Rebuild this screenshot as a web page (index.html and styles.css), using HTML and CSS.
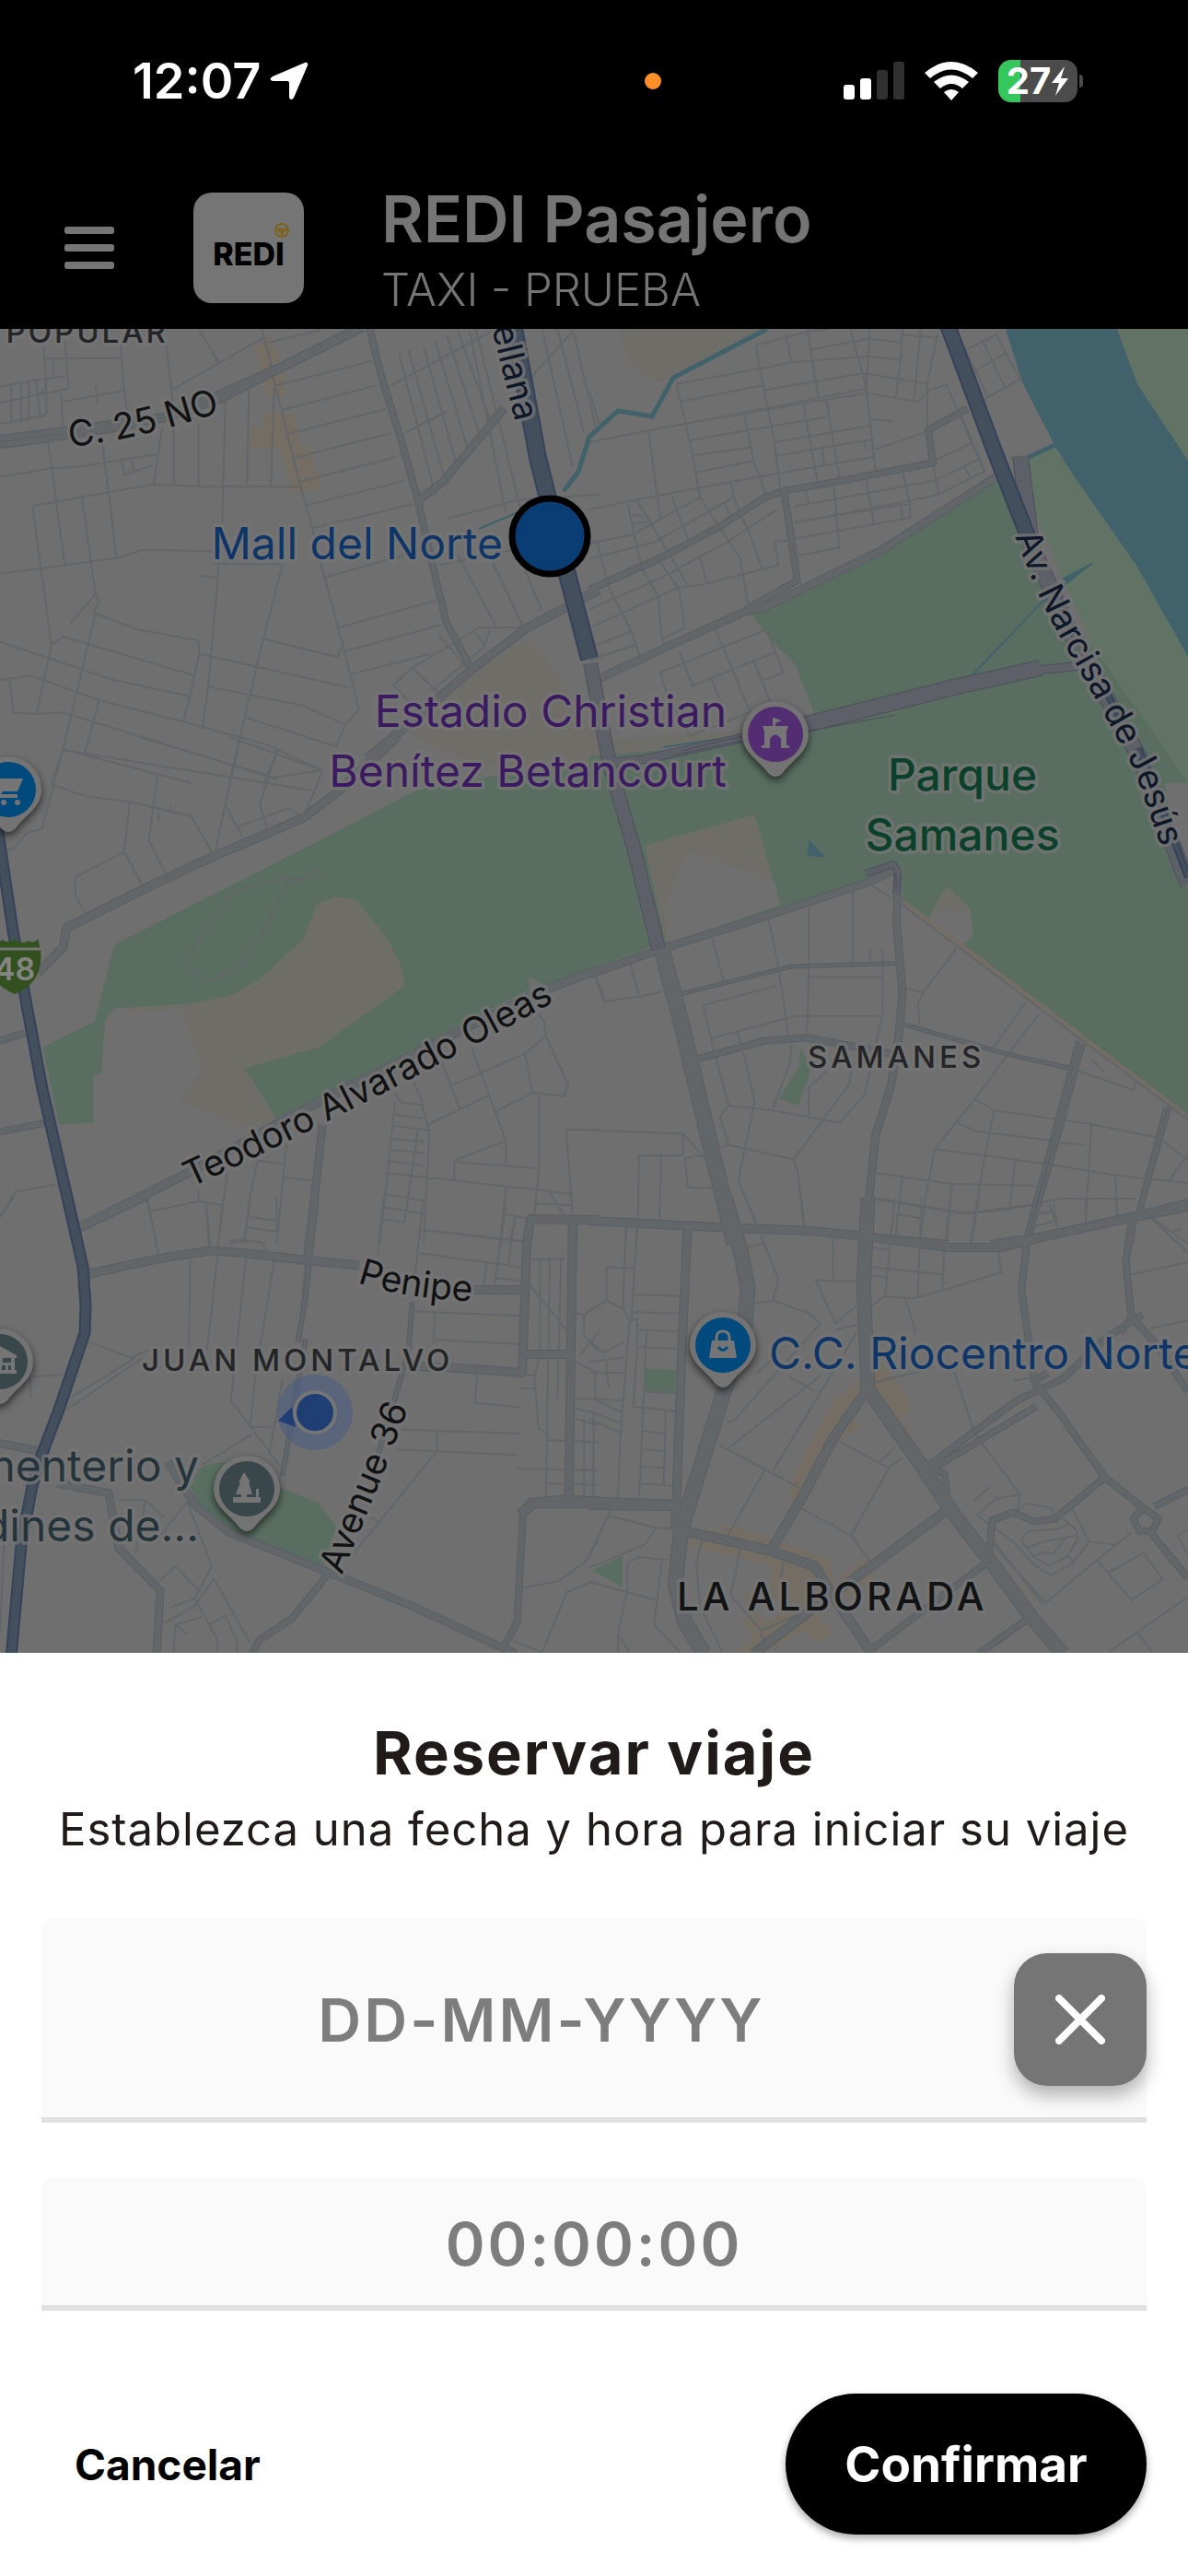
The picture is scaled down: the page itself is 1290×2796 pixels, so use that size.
FILE: index.html
```html
<!DOCTYPE html>
<html lang="es">
<head>
<meta charset="utf-8">
<meta name="viewport" content="width=device-width, initial-scale=1">
<title>REDI Pasajero</title>
<link rel="stylesheet" href="styles.css">
</head>
<body>
<div class="app">
  <header class="top">
    <div class="status">
      <div class="status-left">
        <span class="clock">12:07</span>
        <svg class="arrow" viewBox="0 0 42 42" aria-hidden="true"><path d="M38 1Q42 0 41 4L26 39Q23 43 21 39V23Q21 21 19 21H3Q-2 19 3 16Z"/></svg>
      </div>
      <span class="mic-dot"></span>
      <div class="status-right">
        <svg class="signal" viewBox="0 0 66 42" aria-hidden="true"><rect x="0" y="25" width="12" height="16" rx="3"/><rect x="18" y="18" width="12" height="23" rx="3"/><rect class="off" x="36" y="9" width="12" height="32" rx="3"/><rect class="off" x="54" y="0" width="12" height="41" rx="3"/></svg>
        <svg class="wifi" viewBox="0 0 58 42" aria-hidden="true"><path d="M0 12Q29-12 58 12L52 18Q29-1 6 18Z"/><path d="M10 22Q29 7 48 22L41 29Q29 19 17 29Z"/><path d="M21 33Q29 27 37 33L29 42Z"/></svg>
        <div class="battery"><span>27</span><svg viewBox="0 0 20 32" aria-hidden="true"><path d="M15 0L1 18H9L5 32L19 13H11Z"/></svg></div>
        <span class="battery-tip"></span>
      </div>
    </div>
    <div class="bar">
      <button class="menu" type="button" aria-label="Menú"><span></span><span></span><span></span></button>
      <div class="logo">
        <svg class="wheel" viewBox="0 0 18 18" aria-hidden="true"><circle cx="9" cy="9" r="7"/><path d="M2 8H16M9 9V16M5 9L9 12L13 9"/></svg>
        <span class="wordmark">REDI</span>
      </div>
      <div class="heading"><h1>REDI Pasajero</h1><p>TAXI - PRUEBA</p></div>
    </div>
  </header>

  <main class="map">
    <svg viewBox="0 357 1290 1437" preserveAspectRatio="xMidYMid slice" role="img" aria-label="Mapa">
      <defs>
        <g id="avenues">
          <g transform="translate(0 350) scale(.41454 .33333)">
            <path class="w7" d="M0 378L100 362L260 335L430 305L560 240L740 140L930 20M0 400L130 378L300 345L430 312L580 250L720 160L950 20"/>
            <path class="w6" d="M968 20L1000 180L1050 380L1095 580L1135 800L1170 980L1235 1130"/>
            <path class="w8" d="M1095 580L1160 520L1320 280"/>
            <path class="w9" d="M960 1420L1050 1330L1235 1130L1380 995L1480 930L1568 870"/>
          </g>
          <g transform="translate(640 350) scale(.41454 .33333)">
            <path class="w7" d="M0 870L190 765L340 665L460 570L510 548L640 520L900 457L888 350L990 280M510 548L545 840L410 935"/>
            <path class="w8" d="M25 1160L240 1035L410 940L455 930L760 745L1070 500"/>
          </g>
          <g transform="translate(0 800) scale(.41454 .35077)">
            <path class="w9" d="M1040 0L890 165L795 250L520 390L370 475L175 590L165 650L100 730"/>
            <path class="w7" d="M0 940L65 915M0 1222L115 1195"/>
            <path class="w9" d="M205 1520L490 1350L800 1150L1220 900L1420 785L1568 720"/>
            <path class="w8" d="M845 1200L810 1568M1568 1497L1390 1490L1380 1568M1502 1497V1568"/>
          </g>
          <g transform="translate(640 800) scale(.41454 .35077)">
            <path class="w8" d="M0 735L190 655L460 555L730 450L800 410L808 430L805 580L820 790L810 930L790 1080L750 1230L720 1568"/>
            <path class="w16" d="M185 640L240 880L300 1180L380 1568"/>
            <path class="w7" d="M285 995L460 940L570 930L790 980M0 1497L360 1515L580 1525L720 1545L940 1568M1050 1568L1180 1545L1430 1480L1568 1440M1425 1490L1415 1568"/>
            <path class="w3" d="M240 795L530 710L810 700M820 888L1090 980L1260 1025"/>
            <path class="w3" d="M1280 940L1220 1210L1145 1540M1293 950L1235 1210L1155 1540M1510 1145L1435 1480M1520 1145L1440 1480"/>
          </g>
          <g transform="translate(0 1300) scale(.41454 .33333)">
            <path class="w9" d="M205 100L390 -10M225 250L410 200L550 172L640 180L810 205L940 220"/>
            <path class="w9" d="M825 0L805 205M1240 300H1370M1568 72L1390 70L1380 150L1368 570L1270 560L1080 548M1500 75L1490 990M1370 510H1490"/>
            <path class="w5" d="M1080 340L1070 500L990 840M810 215L800 330L780 470M800 460L740 905"/>
            <path class="w8" d="M0 800L120 828L60 880M150 930L285 962L310 1140L420 1280L410 1490M440 860L510 1000L600 1090L860 1220L1080 1330L1350 1485"/>
            <path class="w7" d="M860 1225L765 1370L680 1440L660 1485M1568 1000H1400L1370 1030L1355 1380L1320 1460M1568 985L1470 980L1390 990L1360 1030"/>
          </g>
          <g transform="translate(640 1300) scale(.41454 .33333)">
            <path class="w9" d="M0 75L360 98L580 108L720 125L940 162H1080L1180 130L1400 70L1568 30"/>
            <path class="w18" d="M355 0L395 170L415 290L405 460L350 640L240 1080L225 1260L250 1380L300 1485"/>
            <path class="w13" d="M730 0L718 280L730 625L860 855L960 1040L1060 1200L1160 1370L1240 1485"/>
            <path class="w9" d="M257 95L242 500L225 1080"/>
            <path class="w10" d="M725 630L640 780L560 970L475 1150M250 1085L475 1150L590 1200L640 1300L740 1485M430 1485L600 1325L760 1180L940 1015"/>
            <path class="w7" d="M0 985L220 995M0 1005L220 1008M1145 150L1132 300L1165 600M1420 80L1405 210L1420 390M1165 600L1200 570M1165 600L1225 690L1350 910L1450 1010M890 870L1120 660L1240 590L1350 460L1450 380M895 885L1170 680M870 860L930 900L940 1010M1420 390L1390 440M1420 390L1480 470L1568 630M1350 910L1220 1045L1165 1055L1110 1025L1055 1050L1045 1190"/>
            <path class="w7" d="M1450 1010L1425 1045L1440 1085L1475 1085L1490 1045ZM1480 1005L1568 950M1470 1090L1568 1240M740 1470L910 1310L1040 1190M1020 1485L1150 1370"/>
          </g>
        </g>
        <g id="highways">
          <path class="w14" d="M556 345L584 497L596 545L619 635L640 715"/>
          <path class="w13" d="M1026 345L1041 385L1080 490L1120 592"/>
          <path class="w5" d="M1150 650L1166 690M1196 740L1222 792M1236 812L1246 836L1290 952"/>
          <path class="w10" d="M-4 890L14 1010L31 1102L46 1182L79 1326L90 1375L93 1417L92 1447L64 1530L46 1577L35 1613L23 1677L12 1800"/>
        </g>
        <g id="trunks">
          <path class="w13" d="M641 720L662 830L688 920L715 1030"/>
          <path class="w9" d="M662 828L700 824L820 798"/>
          <path class="w14" d="M860 790L1040 745L1130 725"/>
          <path class="w9" d="M1120 728L1180 722"/>
          <path class="w14" d="M1108 495L1120 592L1164 690L1195 745L1236 820L1290 960"/>
          <path class="w7" d="M940 948L970 938L975 946L973 970"/>
        </g>
      </defs>

      <rect class="land" y="340" width="1290" height="1480"/>

      <g transform="translate(0 350) scale(.41454 .33333)">
        <path class="shops" d="M665 80L710 40L745 170V240H700ZM655 340H690L685 295H770L785 400H810L840 540L765 555L735 410H655Z"/>
        <path class="sand" d="M1390 1030L1270 1110L1060 1330L1240 1440L1568 1460V1350Z"/>
      </g>
      <g transform="translate(640 350) scale(.41454 .33333)">
        <path class="sand" d="M65 0L110 150L185 195L215 185L480 20V0ZM0 1360L340 1340L600 1270V1310L0 1420Z"/>
        <path class="bank" d="M1110 460L1225 395L1290 500L1440 790L1568 1050V1500H1500L1300 1000ZM1380 0L1435 200L1568 450V0Z"/>
        <path class="park" d="M420 945L760 745L1070 505L1150 760L1350 1110L1568 1500H100L80 1430L600 1310L540 1115L480 1040Z"/>
      </g>
      <g transform="translate(0 800) scale(.41454 .35077)">
        <path class="park" d="M300 642L730 385L1090 165L1290 120L1640 80L1720 640L1430 770L1380 740L1390 780L725 1180L640 1025L700 1180L270 1040L265 1040L245 1045V1194L155 1198L112 960L248 880Z"/>
        <path class="land-area" d="M300 838L480 838L530 1030L470 1125L640 1205L500 1290L245 1194V1045L265 1040L275 880Z"/>
        <path class="sand" d="M320 838L510 824L615 795L680 750L795 625L830 515L875 495L932 503L1015 625L1050 705L1060 770L835 960L640 1025L690 1135L725 1180L660 1215L470 1125L530 1030L475 838L330 858Z"/>
      </g>
      <g transform="translate(640 800) scale(.41454 .35077)">
        <path class="park" d="M0 60L600 0H1480L1568 480V1170L980 640L820 510V410L730 440L200 640L160 650L0 720Z"/>
        <path class="sand" d="M145 335L433 240L500 520L200 640ZM888 560L935 462L998 530L1006 615L975 640Z"/>
        <path class="land-area" d="M258 355L485 445L500 520L205 640L195 530ZM905 535L998 545L1006 615L978 640L888 560Z"/>
        <path class="water" d="M575 318L620 373L570 367Z"/>
        <path class="park" d="M553 958L580 1030L547 1140L497 1118L550 1015Z"/>
        <path class="sand-line" d="M822 510L1568 1175"/>
      </g>
      <g transform="translate(0 1300) scale(.41454 .33333)">
        <path class="park" d="M520 885Q550 860 600 862L735 945L835 995L880 1070L850 1200L600 1080L520 1000L500 940Z"/>
      </g>
      <g transform="translate(640 1300) scale(.41454 .33333)">
        <path class="shops" d="M700 600L760 530L830 640L840 700L815 715L855 800L830 840L730 640L690 730L715 740L650 800L560 1010L520 980L540 890L640 660ZM260 1070L345 1090V1060L480 1110L630 1180L640 1250L720 1175L750 1240L600 1360L635 1420L595 1450L560 1410L450 1485H380L430 1430L400 1380L430 1350L470 1380L540 1300L405 1320V1290L470 1270L480 1200L260 1130Z"/>
        <path class="park" d="M145 556L228 562L222 633L145 628ZM8 1213L87 1165V1268Z"/>
      </g>

      <g class="streets">
        <g transform="translate(0 350) scale(.41454 .33333)">
          <path d="M115 75L120 210L100 240M170 60L180 215M120 117H315M315 60L325 220L335 300M435 75L450 225L455 300M0 210L90 188L170 175M0 262L180 215M165 258L325 222M30 205V330M55 195V325M75 190V320M95 185L105 310M120 180L122 300M0 330L120 303M140 120V175M250 205L255 265M160 230L165 340M450 220L690 50M520 20L575 135M700 65L840 25M685 20L700 90L720 200L780 500L820 680L850 830L900 1060L940 1260M725 205L975 125M740 285L985 205M755 362L1010 282M775 440L1025 360M785 518L1040 438M805 595L1060 515M820 670L1080 592M850 830L1110 740M890 993L1140 905M905 1070L1155 985M920 1145L1125 1080"/>
          <path d="M0 503L135 475L200 470L410 430M125 380L170 790M265 360L305 765M318 450L325 497L400 465M345 440L350 485M425 340L403 525M455 345V525M520 330V532M590 260L582 660M652 220L647 530M718 210L710 530M85 597L400 527L520 533L785 535M85 597L135 1050L95 1275M215 570L250 885L185 980M0 818L305 767L375 740L555 745M250 885L260 910L245 945L360 1000L520 1035L522 1080L510 1150L480 1300M575 770L545 1190L530 1325M740 790L690 1030L600 1500M525 825L570 830M560 785L740 788M690 1030L885 1090L900 1040M525 1080L920 1190M135 1050L165 1023L510 1150M0 1040L300 1165L500 1218M0 1165L80 1150L260 1230L480 1300L700 1375L845 1460M25 1165L35 1270L95 1275L165 1270L540 1415L730 1490M250 950L165 1390L135 1500M260 1230L220 1410M165 1390L410 1470L500 1500M545 1185L795 1248L905 1310L880 1380L640 1285M940 1260L905 1310M730 1390L690 1500"/>
          <path d="M1025 205L1300 20M1060 360L1170 290M1045 100L1140 560M1070 90L1165 510M1110 80L1200 480M1140 60L1230 430M1170 40L1260 380M1200 30L1290 340M1230 25L1325 620M1245 15L1400 790M1390 180L1500 30M1350 20L1365 140M1420 20L1500 470M1460 20L1530 360M1500 20L1560 340M1170 640L1350 580L1568 560M1150 790L1350 740L1568 710M1200 760L1300 990M1290 780L1370 990M1350 730L1420 940M1255 993H1380M1255 993L1080 1125L1030 1180M1285 1000L1265 1060M1150 1020L1220 1120M1245 1010L1270 1055L1130 1200M1080 1125L1160 1220M1030 1180L1090 1260"/>
        </g>
        <g transform="translate(640 350) scale(.41454 .33333)">
          <path d="M0 390L155 352L440 285L725 215M40 380L250 330L625 250L730 230L860 258L890 220L935 203L1035 485L915 560L840 580L550 650M228 200L450 150L530 130L730 110L815 123M238 258L460 203M228 200L265 400L290 570M435 75L465 270L485 390L500 545M435 75L570 30L630 20M515 45L530 130M570 20L600 245M580 88L735 53L815 65M460 220L720 165L885 200M683 20L728 225M735 20L725 215L750 485M820 20L815 123L803 240M868 20L850 255M912 40L885 200L885 350M820 40L910 50M155 352L185 635M405 295L430 450L465 570M265 383L475 338L620 308M270 433L420 407M275 490L430 450M485 390L740 335M485 435L745 380M0 610L130 575L440 503L745 437M560 265L597 515M620 250L655 505M610 410L615 460M735 315L795 322M750 412L885 355M885 460L1000 395M905 515L1020 445M720 390L725 415"/>
          <path d="M535 600L730 555L905 515M535 650L840 590M535 705L690 670L840 635L840 580M550 758L655 733L640 530M725 510L745 655M820 485L840 590M900 460L915 560M980 465L1000 510M970 290L1035 485M100 590L135 790M110 625L140 630M110 655L150 650M125 580L260 860M215 565L260 710M290 570L395 770L415 915M370 520L378 570L430 720L450 800M0 720L115 690L200 630L290 570M0 770L170 715L375 572M0 935L190 830L360 715L490 610M0 995L230 865L310 850L495 790L485 715L520 710M20 715L50 860L110 1005L135 1100M130 785L180 890L190 1030L200 1060M180 770L235 870L250 995L190 1030M290 765L308 850M0 1060L110 1005M0 1100L120 1050M185 1140L465 1000L508 1140L455 1165M185 1140L210 1230L265 1345L430 1265M235 1070L270 1180M265 1185L485 1075M330 1000L420 1265M430 1100L475 1240M320 1160L350 1260M985 90L1065 40L1128 185L1035 250M985 90L1045 245M1030 60L1090 215M1000 165L1090 100M0 220L25 330M355 590L370 630M565 545L575 590M815 595L820 640"/>
        </g>
        <g transform="translate(0 800) scale(.41454 .35077)">
          <path d="M235 0L220 55M165 40L815 165M365 0L720 125L845 103L800 235M600 0L845 103M165 40L110 285L70 295L35 348L0 352M135 147L230 185L340 200L500 245L555 355M630 0L590 210L565 350M725 40L680 210L700 280M590 210L635 310M620 280L755 220L790 245M412 120L390 320L435 425M448 210L446 230M340 200L325 355L375 465M325 355L198 433V490L225 550M800 0L880 30L890 0M415 230V260"/>
          <path class="trail" d="M825 412L795 441H755L735 428L710 453L680 450L607 480L480 700L540 757L612 723L692 598L755 441"/>
          <path d="M385 1430L410 1568M390 1468L520 1437L585 1448M520 1400V1437M540 1445L550 1568M595 1350L570 1568M675 1310L740 1320M675 1310L655 1420L640 1568M750 1260L725 1568M745 1363L815 1373M655 1485L725 1497M650 1518L725 1530M600 1560L640 1555L685 1565M1035 1100L1050 1130L1105 1138L1125 1220L1110 1568M1035 1130L995 1568M1080 1060L1110 1138M1030 1167L1110 1180M1025 1202L1125 1218M1020 1242L1115 1253M1020 1277L1115 1287M1015 1310L1110 1328M1010 1348L1400 1400L1500 1415M1095 1215L1060 1500M1005 1415L1110 1435M1003 1455L1110 1475M1000 1490L1060 1502M1155 1000L1205 1150M1235 960L1325 1250V1320M1185 1078L1375 980L1430 925M1120 1200L1278 1110M1375 980L1395 1100L1478 1112L1488 1075L1430 925L1425 880L1400 840M1295 1160L1395 1100M1190 1310L1325 1250M1190 1310V1375M1195 1315L1410 1335M1412 1110V1320L1400 1480M1483 1215H1568M1483 1215L1500 1480M1110 1525L1375 1560M1325 1395L1310 1568M1405 1443L1500 1450M1440 1410L1478 1480M1320 1475L1385 1490M1350 1485L1335 1568M1560 740L1580 800M0 1485L40 1408L145 1385"/>
        </g>
        <g transform="translate(640 800) scale(.41454 .35077)">
          <path d="M15 735L38 818L130 803L190 788M108 705L130 797M320 618L352 755M470 565L495 710L522 925M575 525V705L570 918M690 475V695M735 655V695M768 655V863L750 950M575 743H768M298 830L490 770M298 830L330 990L365 1140M320 932L540 863H768M388 912L395 950M740 460L790 497M820 520L1568 1185M960 655L875 790L860 830L865 890M830 778L875 790M1142 820L1060 960M1180 855L1110 960L1010 1120L905 1275L880 1430L865 1568M1010 1120L1060 1155L1300 1195L1490 1240L1568 1310M965 1195L1015 1220L1205 1247M905 1275L1205 1322L1370 1355L1568 1380M1230 1255L1300 1262M1315 1195L1300 1505M1060 1155L1035 1300L998 1568M1115 1310L1100 1465M1260 1025L1425 1092L1430 1065M1315 997L1345 1033M825 890L1060 970L1180 1005M755 1350L950 1383L1170 1388M820 1355L800 1568M950 1383L935 1568M745 1430L985 1475L1100 1462L1230 1428H1430M805 1475L870 1490M1378 1360L1383 1490M1215 1435L1225 1510M1180 1475L1210 1470M1165 1515L1215 1497M1520 1370L1568 1290M1490 1240L1568 1310"/>
          <path d="M403 975L433 1130L390 1370L440 1515M530 955L525 1010L480 1150M365 1140L480 1155L655 1193L720 1110L740 1010M365 1140L342 1175L365 1262L345 1270M365 1262L535 1307L545 1340L563 1520M535 1307L680 1075L690 1010M575 1170V1085L620 1035M0 1217L245 1227L300 1300L275 1295L250 1305L258 1395H330M245 1227V1295H130L127 1500M188 1295L183 1500M97 1510L95 1568M125 1510L123 1568M1475 1490L1568 1568M1530 1530L1550 1523"/>
        </g>
        <g transform="translate(0 1300) scale(.41454 .33333)">
          <path d="M385 0L415 185M540 20L548 165M585 0L570 170M655 0L640 140L600 150M640 140L685 145L700 180M725 0V110M498 200L495 485M570 185L542 495M645 190L605 660L740 885M718 205L670 570L655 745M655 747H710M740 590L705 840M800 215L782 470M660 770L530 870M790 330L800 328M1110 0L1080 330M1105 105L1375 145M1098 180L1375 228M1005 0L990 185M1275 210L1265 290M1325 20L1295 290M1350 60L1330 220M1295 260L1370 272M1085 370L1365 385M1140 375L1135 475M1140 463L1365 477M1250 570L1245 668L1365 683M1050 755L1360 768M1145 763V825L990 1060L925 1160M1040 820L1355 838M970 1040L1000 1060M1355 883L1568 888M1430 790L1568 795M1425 930L1568 935M1390 200H1480M1385 280L1490 440M1415 205V515L1400 580L1410 750L1430 765M1440 195L1430 990M1470 195L1460 660M1365 575L1400 580M1365 620L1400 622M1490 375L1530 380L1568 350M1530 380V450L1568 500M1520 510L1568 440M1505 535L1568 570M1505 655H1568M1505 685L1568 705M1505 720L1568 740M1555 700V980M1530 720V990M235 470L350 525L160 670M345 520L390 495M175 690L370 525M85 583L160 577M80 590V650M490 990L415 1110M490 990L555 1200L510 1305L445 1335M460 1200L525 1285M310 985H380L430 1040M380 990L355 1160M460 1200L415 1250M510 1305L570 1440V1485M560 1240L510 1330L430 1385M560 1240L655 1450M455 1485L460 1390L530 1365M550 1390L590 1360L620 1440V1485M460 1390L490 1420M1370 1270L1460 1250L1535 1185L1568 1110M1420 1480L1485 1285L1550 1250M1340 1440L1420 1480M10 1130L0 1420M0 60L35 0"/>
        </g>
        <g transform="translate(640 1300) scale(.41454 .33333)">
          <path d="M95 100L88 360L105 400L80 800L75 975M125 100L110 400L125 395V500L115 680L230 695M45 225L120 230M45 225V335L0 370M45 335L85 360M115 315L238 320M115 372L235 378M125 430L232 435M130 487L230 492M0 465L38 505L90 470M0 535L90 520M0 570L88 570M45 535L50 620M15 570V655M0 655L85 660M0 695L85 735M0 720L80 765M10 655L85 700M10 795V975M150 430L138 760L130 975M200 695L195 935M138 760L200 768M135 820L198 825M133 875L195 880M130 930L215 938M145 632L225 635M410 0L495 265L480 335L435 343M480 335L580 378L605 410L375 730L360 728M415 160L455 148M555 0L563 95M638 125V272H700M638 272L593 268L645 410L700 350M645 430L700 415M500 500L440 570M700 440L480 890M525 585L590 630M605 580L365 815M340 805L550 945M460 885L360 1105M545 1005L685 1100L740 1190M685 1100L785 880L640 785M760 860L800 815M785 880L820 845"/>
          <path d="M740 0L985 50L1180 20M800 0L775 320L730 360M870 0L860 320M945 0L930 170L925 300M740 160L790 172M735 225L925 250M740 255L780 258M775 322L850 328L930 300L1080 243L1070 175M1000 155L1020 0M805 55L870 67M750 600L870 565M830 335L855 440M955 565L1010 770L1128 965L1120 1025M1110 597L1165 583M1420 250L1568 210M1470 425L1568 400M1475 70L1568 180M1530 110L1550 103M1205 20L1225 95M1300 0V80M1378 0L1383 65M1170 50L1215 45M1165 95L1215 77M1005 990L1050 940M1015 1035L1065 980L1128 965M1145 995L1210 1010L1220 1040M1145 995L1120 1020M1015 1035L1110 1120L1170 1200L1210 1230L1265 1190L1310 1120L1265 1015M1150 1085L1130 1115L1165 1170L1205 1198L1250 1170L1280 1110L1275 1080L1240 1045M1150 1085L1225 1080L1260 1060M1145 1140L1190 1120L1275 1100M1165 1170L1185 1155L1215 1160L1250 1105M1045 1110L1195 1320L1330 1180L1420 1090M1310 1120L1380 1130M1330 1180L1420 1310L1502 1243L1452 1157L1360 1220M1255 1165L1270 1195M1568 1080L1540 1100L1568 1160M1360 1480L1568 1300M1435 1410L1475 1485M55 1015L50 1035L175 1075L230 1078M50 1035L0 1160M175 1075L145 1130L0 1205M0 1250L175 1310M190 1180L170 1390L240 1485M100 1190L130 1170L205 1180M100 1190V1270L75 1420L105 1480M75 1420V1485M295 1115L280 1190L290 1330L350 1485M395 1145L370 1295L450 1410L540 1360M510 1185L500 1240M445 1420L460 1440M1060 1120L1190 1330"/>
        </g>
      </g>

      <g class="water-lines">
        <path class="canal" d="M833 357L731 410L708 452L671 446L640 474L628 512L612 533"/>
        <path class="canal" d="M1102 503L1148 482"/>
        <path class="creek" d="M1186 611L1158 633L1130 655L1046 743L900 775L875 781M720 811L782 802M520 574L565 555M412 390L430 460"/>
      </g>
      <path class="water" d="M1092 357L1110 415L1145 483L1165 515L1235 615L1290 713V500L1235 417L1213 357Z"/>
      <path class="water" d="M1187 610L1160 633L1153 628Z"/>

      <use href="#avenues" class="casing"/>
      <use href="#avenues" class="paving"/>
      <use href="#trunks" class="casing trunk"/>
      <use href="#trunks" class="paving trunk"/>
      <use href="#highways" class="casing highway"/>
      <use href="#highways" class="paving highway"/>
      <path class="lane" d="M730 820L806 804M740 815L806 799M880 793L972 776M973 948V966"/>

      <g class="labels">
        <path id="p-25no" d="M76 485Q160 476 260 440" class="guide"/>
        <path id="p-orellana" d="M534 356L570 500" class="guide"/>
        <path id="p-narcisa" d="M1102 582L1123 635Q1146 686 1168 720L1206 788L1232 836L1275 960" class="guide"/>
        <path id="p-teodoro" d="M207 1289Q400 1200 640 1066" class="guide"/>
        <path id="p-penipe" d="M388 1392Q445 1412 550 1414" class="guide"/>
        <path id="p-avenue" d="M371 1710L412 1610L460 1485" class="guide"/>
        <text class="area small" x="183" y="372" text-anchor="end">POPULAR</text>
        <text class="street"><textPath href="#p-25no">C. 25 NO</textPath></text>
        <text class="street navy"><textPath href="#p-orellana">ellana</textPath></text>
        <text class="street navy"><textPath href="#p-narcisa">Av. Narcisa de Jesús</textPath></text>
        <text class="street"><textPath href="#p-teodoro">Teodoro Alvarado Oleas</textPath></text>
        <text class="street"><textPath href="#p-penipe">Penipe</textPath></text>
        <text class="street"><textPath href="#p-avenue">Avenue 36</textPath></text>
        <text class="place shop" x="546" y="607" text-anchor="end">Mall del Norte</text>
        <text class="place stadium" x="789" y="789" text-anchor="end">Estadio Christian</text>
        <text class="place stadium" x="789" y="854" text-anchor="end">Benítez Betancourt</text>
        <text class="place green" x="1045" y="858" text-anchor="middle">Parque</text>
        <text class="place green" x="1045" y="923" text-anchor="middle">Samanes</text>
        <text class="place shop" x="835" y="1486">C.C. Riocentro Norte</text>
        <text class="place grey" x="216" y="1608" text-anchor="end">Cementerio y</text>
        <text class="place grey" x="216" y="1673" text-anchor="end">Jardines de...</text>
        <text class="area" x="877" y="1159">SAMANES</text>
        <text class="area" x="154" y="1488">JUAN MONTALVO</text>
        <text class="area big" x="735" y="1748">LA ALBORADA</text>
      </g>

      <g class="shield"><path d="M-14 1024Q-4 1028 2 1020Q10 1025 16 1019Q24 1026 31 1021Q37 1025 41 1019L44 1031Q48 1066 16 1079Q-16 1066 -14 1031Z"/><path class="rule" d="M-14 1030H44"/><text x="16" y="1064" text-anchor="middle">48</text></g>

      <g class="pins">
        <g transform="translate(842 797)"><path class="drop" d="M0-36A36 36 0 0 1 36 0C36 20 18 28 8 42Q0 50-8 42C-18 28-36 20-36 0A36 36 0 0 1 0-36Z"/><circle r="30" fill="#532d72"/><path class="glyph" d="M-2-18L7-15L0-12V-9H14L12-3V12H15V15H6V5Q0-4-6 5V15H-15V12H-12V-3L-14-9H-3V-18Z"/></g>
        <g transform="translate(9 857)"><path class="drop" d="M0-36A36 36 0 0 1 36 0C36 20 18 28 8 42Q0 50-8 42C-18 28-36 20-36 0A36 36 0 0 1 0-36Z"/><circle r="30" fill="#004a7e"/><path class="glyph" d="M-18-16H-12L-10-12H16L10 2H-6L-8 5H10V9H-10L-14 6L-9 0L-14-12H-18Z"/><circle class="glyph" cx="-5" cy="14" r="3"/><circle class="glyph" cx="10" cy="14" r="3"/></g>
        <g transform="translate(0 1478)"><path class="drop" d="M0-36A36 36 0 0 1 36 0C36 20 18 28 8 42Q0 50-8 42C-18 28-36 20-36 0A36 36 0 0 1 0-36Z"/><circle r="30" fill="#39464a"/><path class="glyph" d="M0-17L18-7V-4H16V9H18V13H-18V9H12V-4H3V1H12V4H9V9H6V4H2V9H-10V-4H-18V-7Z"/></g>
        <g transform="translate(785 1460)"><path class="drop" d="M0-36A36 36 0 0 1 36 0C36 20 18 28 8 42Q0 50-8 42C-18 28-36 20-36 0A36 36 0 0 1 0-36Z"/><circle r="30" fill="#004a7e"/><path class="glyph" d="M-12-5H12L15 14H-15Z"/><path class="handle" d="M-7-4V-8Q-7-15 0-15T7-8V-4"/><path class="smile" d="M-5 2Q0 9 5 2"/></g>
        <g transform="translate(268 1616)"><path class="drop" d="M0-36A36 36 0 0 1 36 0C36 20 18 28 8 42Q0 50-8 42C-18 28-36 20-36 0A36 36 0 0 1 0-36Z"/><circle r="30" fill="#39464a"/><path class="glyph" d="M-3-18L4-7H2L6 6H0V9H10V0H13V9H15V15H-15V9H-6V6H-12L-7-7H-9Z"/></g>
      </g>

      <circle class="pickup" cx="597" cy="582" r="41"/>

      <g class="me"><circle class="halo" cx="342" cy="1533" r="41"/><path d="M302 1542L317 1527L321 1549Z"/><circle class="ring" cx="342" cy="1533" r="22"/></g>
    </svg>
  </main>

  <form class="sheet">
    <h2>Reservar viaje</h2>
    <p class="hint">Establezca una fecha y hora para iniciar su viaje</p>
    <div class="field date">
      <input type="text" placeholder="DD-MM-YYYY" aria-label="Fecha">
      <button class="clear" type="button" aria-label="Borrar fecha"><svg viewBox="0 0 54 54" aria-hidden="true"><path d="M4 4L50 50M50 4L4 50"/></svg></button>
    </div>
    <div class="field time">
      <input type="text" placeholder="00:00:00" aria-label="Hora">
    </div>
    <div class="actions">
      <button class="cancel" type="button">Cancelar</button>
      <button class="confirm" type="submit">Confirmar</button>
    </div>
  </form>
</div>
</body>
</html>
```
FILE: styles.css
```css
* { box-sizing: border-box; }
body { margin: 0; background: #000; font-family: Inter, "Liberation Sans", sans-serif; }
button, input { font: inherit; border: 0; margin: 0; }
h1, h2, p { margin: 0; }
.app { display: flex; flex-direction: column; min-height: 100vh; }

/* status bar and app bar */
.top { background: #000; }
.status { display: grid; grid-template-columns: 1fr auto 1fr; align-items: center; height: 180px; padding: 0 114px 4px 144px; color: #fff; }
.status-left { display: flex; align-items: center; gap: 10px; }
.clock { font-size: 54px; font-weight: 600; line-height: 64px; }
.arrow { width: 42px; height: 42px; fill: #fff; }
.mic-dot { width: 18px; height: 18px; margin-left: 98px; border-radius: 50%; background: #ff8f28; }
.status-right { display: flex; align-items: center; justify-content: flex-end; }
.signal { width: 66px; height: 42px; margin-right: 22px; fill: #fff; }
.signal .off { fill: #303030; }
.wifi { width: 58px; height: 42px; margin-right: 22px; fill: #fff; }
.battery { display: flex; align-items: center; justify-content: center; width: 86px; height: 46px; border-radius: 14px; background: linear-gradient(90deg, #34c759 24px, #4b4b4b 24px); font-size: 40px; font-weight: 700; line-height: 46px; }
.battery svg { width: 20px; height: 32px; fill: #fff; }
.battery-tip { width: 4px; height: 14px; margin-left: 2px; border-radius: 0 4px 4px 0; background: #4b4b4b; }
.bar { display: flex; align-items: center; height: 177px; padding: 0 70px; }
.menu { display: flex; flex-direction: column; gap: 11px; width: 54px; padding: 0; background: none; }
.menu span { height: 8px; border-radius: 3px; background: #757575; }
.logo { display: flex; flex-direction: column; align-items: center; justify-content: center; width: 120px; height: 120px; margin: 0 84px 0 86px; padding-bottom: 4px; border-radius: 20px; background: #757575; }
.wheel { width: 18px; height: 18px; align-self: flex-end; margin-right: 15px; fill: none; stroke: #7d621b; stroke-width: 2; }
.wordmark { color: #000; font-size: 34px; font-weight: 800; line-height: 34px; }
.heading { padding-top: 8px; color: #757575; }
h1 { font-size: 70px; font-weight: 600; line-height: 84px; }
.heading p { font-size: 49px; font-weight: 300; line-height: 70px; }

/* map */
.map { flex: 1 1 0; min-height: 400px; overflow: hidden; position: relative; }
.map > svg { position: absolute; width: 100%; height: 100%; display: block; }
.map path { vector-effect: non-scaling-stroke; }
.land, .land-area { fill: #6f6f6f; }
.park { fill: #596e61; }
.bank { fill: #617365; }
.water { fill: #41626b; }
.sand { fill: #6f6d67; }
.shops { fill: #736d63; }
.sand-line { fill: none; stroke: #736d66; stroke-width: 5px; }
.streets path { fill: none; stroke: #626669; stroke-width: 2px; }
.streets .trail { stroke: #636468; }
.canal { fill: none; stroke: #41626b; stroke-width: 5px; }
.creek { fill: none; stroke: #41626b; stroke-width: 2px; }
.lane { fill: none; stroke: #4b4e58; stroke-width: 1px; }
.casing { --edge: 2px; fill: none; stroke: #575f65; stroke-linejoin: round; }
.paving { --edge: 0px; fill: none; stroke: #626669; stroke-linejoin: round; }
.casing.trunk { stroke: #4c505c; }
.paving.trunk { stroke: #5d6067; }
.casing.highway { --edge: 4px; stroke: #35435a; }
.paving.highway { stroke: #434f5c; }
.w3 { stroke-width: calc(3px + var(--edge)); }
.w5 { stroke-width: calc(4px + var(--edge)); }
.w6 { stroke-width: calc(6px + var(--edge)); }
.w7 { stroke-width: calc(6px + var(--edge)); }
.w8 { stroke-width: calc(7px + var(--edge)); }
.w9 { stroke-width: calc(8px + var(--edge)); }
.w10 { stroke-width: calc(9px + var(--edge)); }
.w13 { stroke-width: calc(14px + var(--edge)); }
.w14 { stroke-width: calc(16px + var(--edge)); }
.w16 { stroke-width: calc(16px + var(--edge)); }
.w18 { stroke-width: calc(15px + var(--edge)); }
.guide { fill: none; }
.labels text { paint-order: stroke; stroke: #757575; stroke-opacity: .8; stroke-width: 7px; stroke-linejoin: round; }
.place { font-size: 48px; }
.street { font-size: 39px; fill: #101112; }
.area { font-size: 33px; font-weight: 500; letter-spacing: 4px; fill: #232527; }
.area.small { letter-spacing: 3px; }
.area.big { font-size: 42px; fill: #121315; }
.navy { font-size: 38px; fill: #0e1728; }
.shop { fill: #0e3568; }
.stadium { fill: #3c1a61; }
.green { font-weight: 500; fill: #0b402b; }
.grey { fill: #25343b; }
.shield path { fill: #33501f; }
.shield .rule { stroke: #757575; stroke-width: 3px; }
.shield text { font-size: 34px; font-weight: 600; fill: #858585; }
.pins .drop { fill: #737373; filter: drop-shadow(0 4px 4px rgba(0, 0, 0, .6)); }
.glyph { fill: #757575; }
.handle { fill: none; stroke: #757575; stroke-width: 3px; }
.smile { fill: none; stroke: #004a7e; stroke-width: 3px; }
.pickup { fill: #0a3d73; stroke: #000; stroke-width: 7px; }
.me path { fill: #1e3e74; }
.halo { fill: #4e5e80; fill-opacity: .65; }
.ring { fill: #1e3e74; stroke: #757575; stroke-width: 4px; }

/* booking sheet */
.sheet { padding: 72px 45px 45px; background: #fff; color: #201a1b; text-align: center; }
h2 { font-size: 65px; font-weight: 700; line-height: 74px; letter-spacing: 2px; }
.hint { padding-top: 14px; font-size: 49px; line-height: 64px; letter-spacing: 1px; white-space: nowrap; }
.field { display: flex; align-items: center; padding-top: 4px; border-bottom: 6px solid #e0e0e0; border-radius: 12px 12px 0 0; background: #fafafa; }
.field input { flex: 1; min-width: 0; padding: 0; background: none; text-align: center; font-size: 65px; font-weight: 600; letter-spacing: 3px; outline: 0; }
.field input::placeholder { color: #7d7d7d; opacity: 1; }
.date { height: 222px; margin-top: 64px; }
.date input { margin-right: -30px; }
.time { height: 144px; margin-top: 60px; }
.clear { position: relative; display: grid; place-items: center; width: 144px; height: 144px; padding: 0; border-radius: 36px; background: #757575; box-shadow: 0 10px 20px rgba(0, 0, 0, .3); }
.clear svg { width: 54px; height: 54px; fill: none; stroke: #fff; stroke-width: 8; stroke-linecap: round; }
.actions { display: flex; align-items: center; justify-content: space-between; margin-top: 90px; }
.cancel { padding: 36px; background: none; color: #000; font-size: 46px; font-weight: 700; line-height: 56px; }
.confirm { width: 392px; height: 153px; border-radius: 77px; background: #000; color: #fff; font-size: 53px; font-weight: 700; box-shadow: 0 4px 8px rgba(0, 0, 0, .35); }
```
